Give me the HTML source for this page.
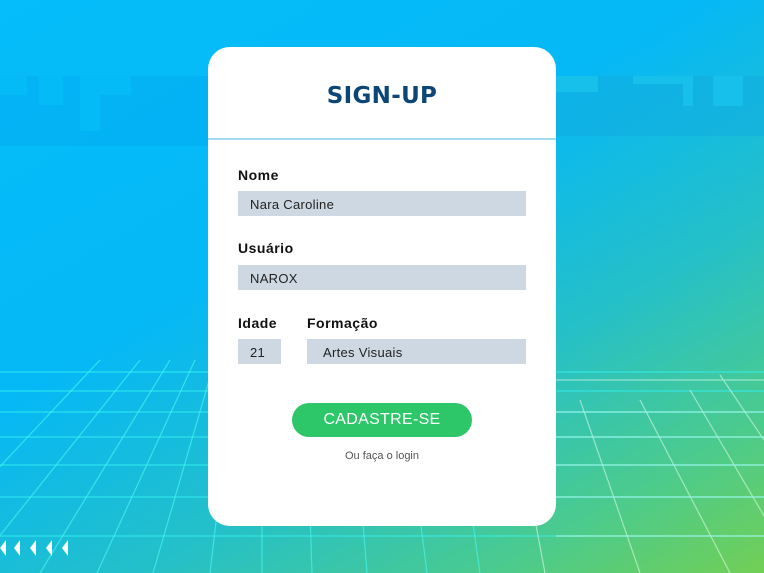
<!DOCTYPE html>
<html><head><meta charset="utf-8"><style>
*{margin:0;padding:0;box-sizing:border-box}
body{width:764px;height:573px;overflow:hidden;position:relative;font-family:"Liberation Sans",sans-serif;
background:linear-gradient(150deg,#05bdfa 0%,#05b8f6 40%,#25c0c8 65%,#4ccb8c 85%,#72cf55 100%)}
svg.bg{position:absolute;left:0;top:0}
.card{position:absolute;left:208px;top:47px;width:348px;height:479px;background:#fff;border-radius:22px}
.title{position:absolute;top:83px;left:208px;width:348px;text-align:center;font-family:"DejaVu Sans",sans-serif;font-weight:bold;font-size:23px;color:#0b4677;letter-spacing:0.3px}
.line{position:absolute;left:208px;top:138px;width:348px;height:2px;background:#9fdcef}
.lbl{position:absolute;font-weight:bold;font-size:14px;color:#111;letter-spacing:0.5px}
.in{position:absolute;background:#cdd8e2;height:25px;font-size:13px;color:#222;line-height:27px;padding-left:12px;letter-spacing:0.3px}
.btn{position:absolute;left:292px;top:403px;width:180px;height:34px;border-radius:17px;background:#2dc76a;color:#fff;text-align:center;line-height:34px;font-size:16px;letter-spacing:0.3px}
.lg{position:absolute;left:208px;width:348px;top:450px;text-align:center;font-size:11px;color:#555}
</style></head><body>
<svg class="bg" width="764" height="573">
<g fill="#02aef2" opacity="0.6">
<rect x="0" y="76" width="208" height="70"/>
<rect x="556" y="76" width="208" height="60" fill="#12aee0"/>
</g>
<g fill="#05bbf7">
<rect x="0" y="76" width="27" height="19"/><rect x="39" y="76" width="24" height="29"/>
<rect x="80" y="76" width="20" height="55"/><rect x="100" y="76" width="31" height="19"/>
<rect x="131" y="76" width="77" height="0"/>
</g>
<g fill="#16c0ea">
<rect x="556" y="76" width="42" height="16"/><rect x="633" y="76" width="52" height="8"/>
<rect x="683" y="76" width="10" height="30"/><rect x="713" y="76" width="30" height="30"/>
</g>
<g stroke-width="1.2" fill="none">
<g stroke="#33f0f0" opacity="0.75">
<line x1="0" y1="372" x2="764" y2="372"/><line x1="0" y1="391" x2="764" y2="391"/>
<line x1="0" y1="412" x2="764" y2="412"/><line x1="0" y1="437" x2="764" y2="437"/>
<line x1="0" y1="465" x2="764" y2="465"/><line x1="0" y1="497" x2="764" y2="497"/>
<line x1="0" y1="536" x2="764" y2="536"/>
</g>
<g stroke="#44f5ee" opacity="0.7">
<line x1="140" y1="360" x2="-30" y2="573"/><line x1="170" y1="360" x2="40" y2="573"/>
<line x1="195" y1="360" x2="97" y2="573"/><line x1="215" y1="360" x2="153" y2="573"/>
<line x1="235" y1="360" x2="210" y2="573"/><line x1="262" y1="360" x2="262" y2="573"/>
<line x1="305" y1="360" x2="312" y2="573"/><line x1="350" y1="360" x2="367" y2="573"/>
<line x1="400" y1="360" x2="427" y2="573"/><line x1="450" y1="360" x2="480" y2="573"/>
<line x1="100" y1="360" x2="-100" y2="573"/>
</g>
<g stroke="#e8fff0" opacity="0.55">
<line x1="556" y1="380" x2="764" y2="380"/><line x1="556" y1="412" x2="764" y2="412"/>
<line x1="556" y1="437" x2="764" y2="437"/><line x1="556" y1="465" x2="764" y2="465"/>
<line x1="556" y1="497" x2="764" y2="497"/><line x1="556" y1="536" x2="764" y2="536"/>
<line x1="580" y1="400" x2="640" y2="573"/><line x1="640" y1="400" x2="730" y2="573"/>
<line x1="690" y1="390" x2="790" y2="560"/><line x1="720" y1="375" x2="764" y2="440"/>
<line x1="520" y1="440" x2="545" y2="573"/>
</g>
</g>
<g fill="#fff"><polygon points="6,540 0,548 6,556"/><polygon points="20,540 14,548 20,556"/><polygon points="36,540 30,548 36,556"/><polygon points="52,540 46,548 52,556"/><polygon points="68,540 62,548 68,556"/></g>
</svg>
<div class="card"></div>
<div class="title">SIGN-UP</div>
<div class="line"></div>
<div class="lbl" style="left:238px;top:167px">Nome</div>
<div class="in" style="left:238px;top:191px;width:288px">Nara Caroline</div>
<div class="lbl" style="left:238px;top:240px">Usuário</div>
<div class="in" style="left:238px;top:265px;width:288px">NAROX</div>
<div class="lbl" style="left:238px;top:315px">Idade</div>
<div class="lbl" style="left:307px;top:315px">Formação</div>
<div class="in" style="left:238px;top:339px;width:43px">21</div>
<div class="in" style="left:307px;top:339px;width:219px;padding-left:16px">Artes Visuais</div>
<div class="btn">CADASTRE-SE</div>
<div class="lg">Ou faça o login</div>
</body></html>
